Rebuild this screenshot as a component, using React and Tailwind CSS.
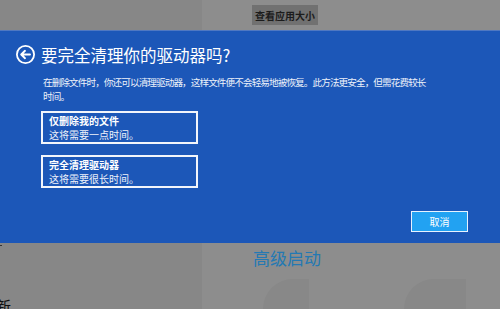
import React from 'react';

const BackIcon = () => (
  <svg width="21" height="21" viewBox="0 0 21 21" fill="none" className="shrink-0">
    <circle cx="10.5" cy="10.5" r="8.6" stroke="white" strokeWidth="1.8" />
    <path d="M15 10.5H6.5M10 6.8l-3.8 3.7 3.8 3.7" stroke="white" strokeWidth="1.9" strokeLinecap="round" strokeLinejoin="round" />
  </svg>
);

const Option = ({ title, note }) => (
  <div className="w-[157px] h-[33px] border-2 border-[#f2f5fb] flex flex-col justify-center pl-[6px] leading-[14px]">
    <div className="text-[10px] font-bold text-white">{title}</div>
    <div className="text-[10px] text-[#eef2fa]">{note}</div>
  </div>
);

export default function App() {
  return (
    <div
      className="w-[500px] h-[309px] overflow-hidden flex flex-col bg-[#8c8c8c]"
      style={{ fontFamily: '"Noto Sans CJK SC", "Noto Sans", sans-serif' }}
    >
      {/* greyed-out page behind the dialog */}
      <div className="h-[31px] flex">
        <div className="w-[202px] bg-[#878787]" />
        <div className="flex-1 bg-[#8d8d8d] pt-[5px] pl-[50px]">
          <div className="w-[66px] h-[20px] bg-[#717171] flex items-center justify-center text-[10px] font-bold text-[#1c1c1c]">
            查看应用大小
          </div>
        </div>
      </div>

      {/* dialog band */}
      <div className="h-[216px] bg-[#1c57b8] border-t border-[#4f78c2] pl-[15px] pr-[32px] pt-[13px] flex flex-col">
        <div className="flex items-center gap-[5px]">
          <BackIcon />
          <div className="text-[16.5px] leading-[20px] text-white">要完全清理你的驱动器吗?</div>
        </div>
        <div className="mt-[10px] ml-[28px] text-[9.6px] leading-[14px] text-[#eef2fa] whitespace-nowrap tracking-[-0.9px]">
          在删除文件时，你还可以清理驱动器，这样文件便不会轻易地被恢复。此方法更安全，但需花费较长
          <br />
          时间。
        </div>
        <div className="mt-[8px] ml-[26px] flex flex-col gap-[11px]">
          <Option title="仅删除我的文件" note="这将需要一点时间。" />
          <Option title="完全清理驱动器" note="这将需要很长时间。" />
        </div>
        <div className="mt-[23px] flex justify-end">
          <div className="w-[57px] h-[21px] bg-[#22a2f2] border border-[#e8f3ff] flex items-center justify-center text-[10px] text-white">
            取消
          </div>
        </div>
      </div>

      {/* bottom part of the page */}
      <div className="flex-1 flex">
        <div className="w-[202px] bg-[#878787] relative">
          <div className="absolute left-0 top-[2px] w-[2px] h-[1px] bg-[#333]" />
          <div className="absolute left-[-4px] bottom-[-8px] text-[15px] text-[#111]">新</div>
        </div>
        <div className="flex-1 bg-[#8d8d8d] flex flex-col pl-[51px]">
          <div className="text-[17px] leading-[22px] mt-[4px] text-[#2479b3]">高级启动</div>
          <div className="flex mt-[10px] gap-[95px] pl-[10px]">
            <div className="w-[46px] h-[30px] bg-[#888888] rounded-tl-[30px]" />
            <div className="w-[62px] h-[30px] bg-[#888888] rounded-tl-[30px]" />
          </div>
        </div>
      </div>
    </div>
  );
}
